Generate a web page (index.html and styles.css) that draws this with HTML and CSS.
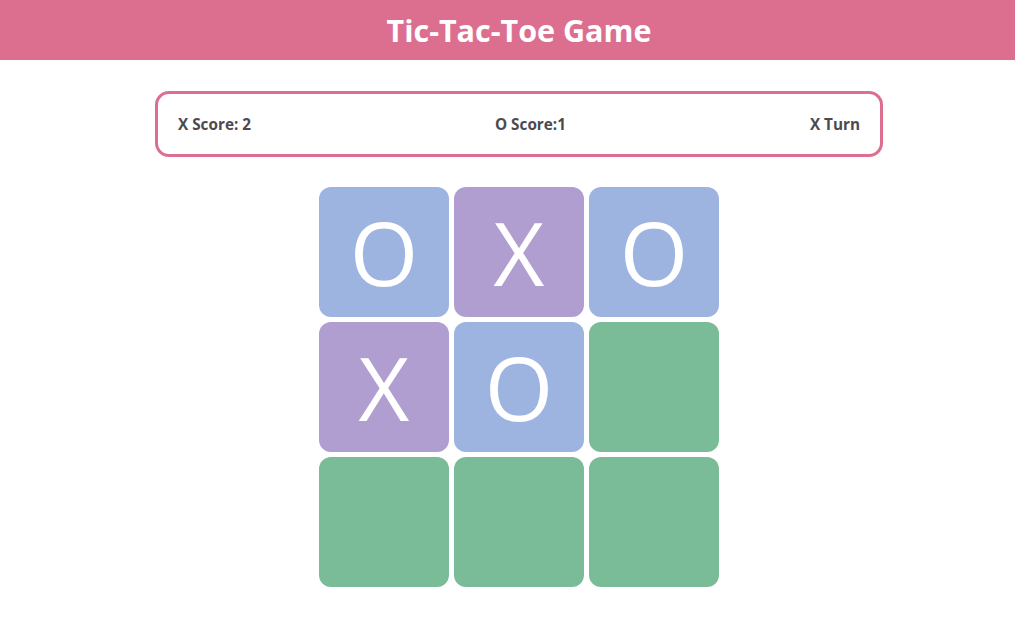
FILE: index.html
```html
<!DOCTYPE html>
<html>
<head>
<meta charset="utf-8">
<link rel="stylesheet" href="styles.css">
</head>
<body>
<header class="top">
  <h1 class="title">Tic-Tac-Toe Game</h1>
</header>
<main class="main">
  <div class="scores">
    <span class="score">X Score: 2</span>
    <span class="score">O Score:1</span>
    <span class="score">X Turn</span>
  </div>
  <div class="board">
    <div class="cell o">O</div>
    <div class="cell x">X</div>
    <div class="cell o">O</div>
    <div class="cell x">X</div>
    <div class="cell o">O</div>
    <div class="cell empty"></div>
    <div class="cell empty"></div>
    <div class="cell empty"></div>
    <div class="cell empty"></div>
  </div>
</main>
</body>
</html>
```
FILE: styles.css
```css
html, body {
  margin: 0;
  padding: 0;
  background: #ffffff;
  font-family: "Open Sans", "Noto Sans", sans-serif;
}
.top {
  background: #dc6f8f;
  height: 60px;
  display: flex;
  align-items: center;
  justify-content: center;
  padding-left: 23px;
}
.title {
  margin: 0;
  color: #ffffff;
  font-size: 30.5px;
  font-weight: 700;
  line-height: 1;
}
.main {
  padding-left: 23px;
  display: flex;
  flex-direction: column;
  align-items: center;
  padding-top: 31px;
}
.scores {
  box-sizing: border-box;
  width: 728px;
  height: 66px;
  border: 3px solid #dc6f8f;
  border-radius: 14px;
  display: flex;
  align-items: center;
  justify-content: space-between;
  padding: 0 20px;
}
.score {
  font-size: 15.3px;
  font-weight: 700;
  color: #4d4a4f;
}
.board {
  margin-top: 30px;
  display: grid;
  grid-template-columns: repeat(3, 130px);
  grid-template-rows: repeat(3, 130px);
  gap: 5px;
}
.cell {
  border-radius: 12px;
  display: flex;
  align-items: center;
  justify-content: center;
  color: #ffffff;
  font-size: 88px;
  font-weight: 400;
  line-height: 1;
}
.cell.o { background: #9db4e0; }
.cell.x { background: #b09ed0; }
.cell.empty { background: #7bbc98; }
```
